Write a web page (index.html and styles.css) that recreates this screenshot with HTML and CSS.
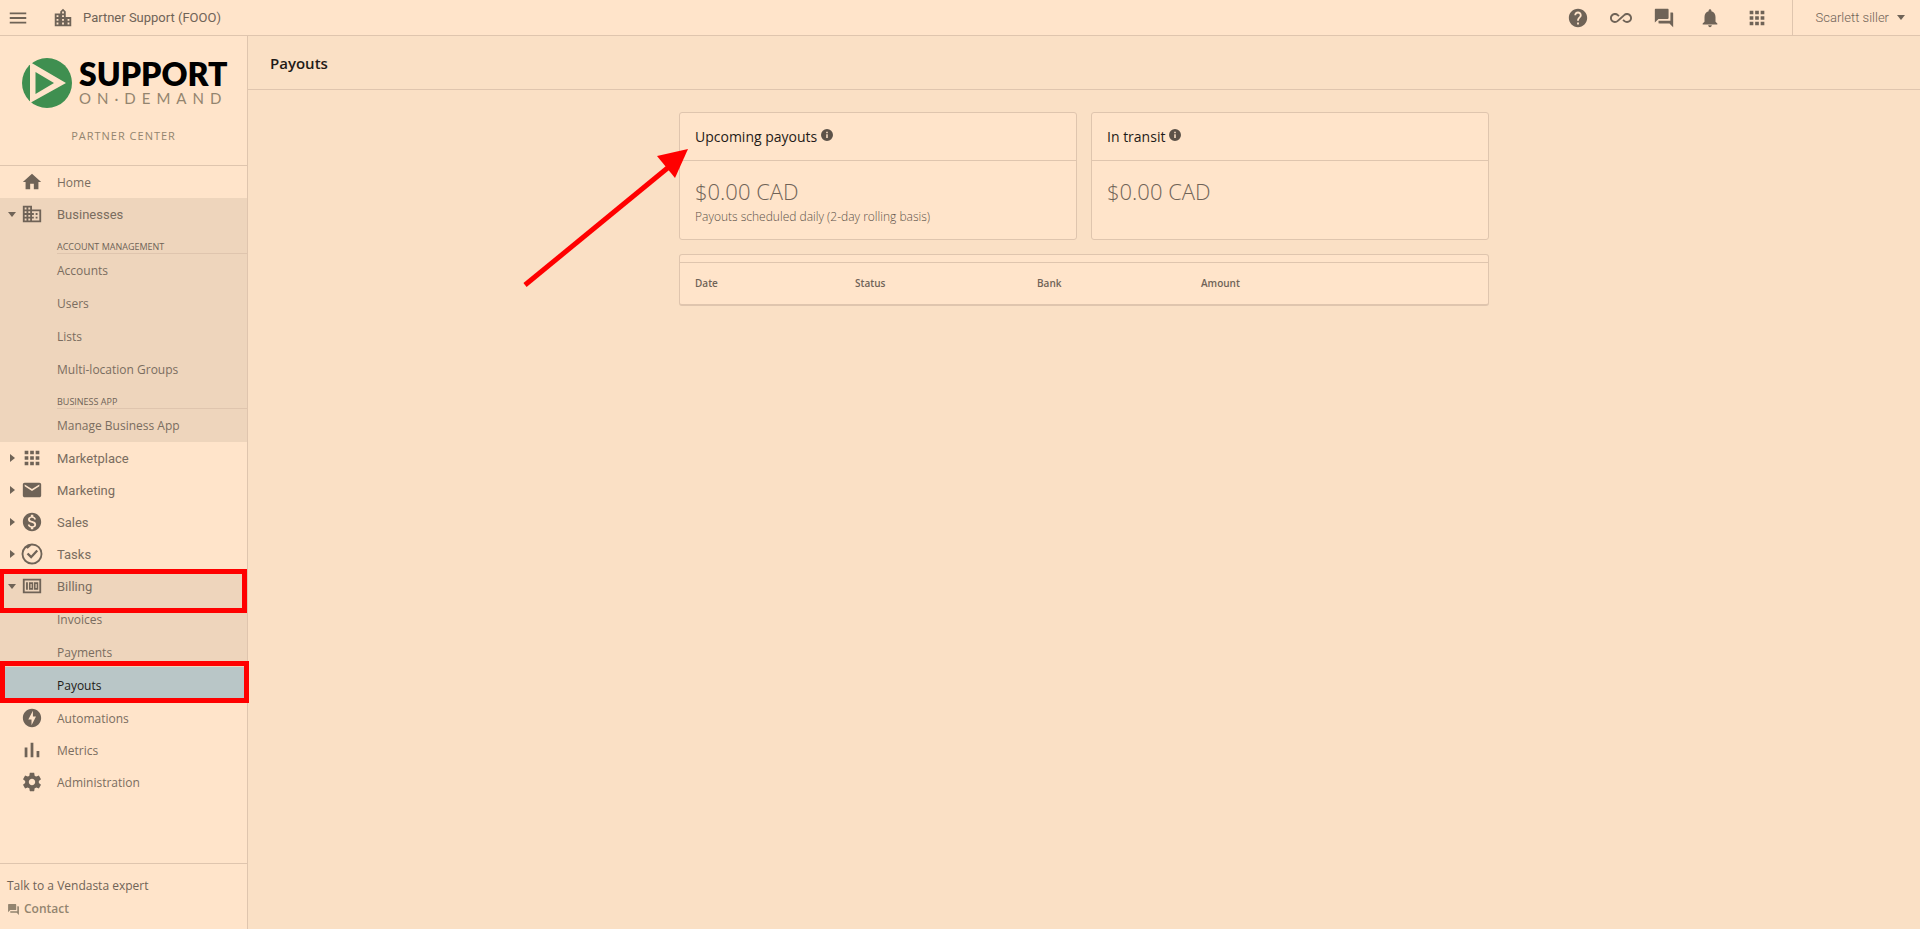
FILE: index.html
```html
<!DOCTYPE html>
<html lang="en">
<head>
<meta charset="UTF-8">
<meta name="viewport" content="width=device-width, initial-scale=1.0">
<title>Payouts</title>
<link rel="stylesheet" href="styles.css">
</head>
<body>
<svg class="sprite" aria-hidden="true">
  <symbol id="i-menu" viewBox="0 0 24 24"><path d="M3 18h18v-2H3v2zm0-5h18v-2H3v2zm0-7v2h18V6H3z"/></symbol>
  <symbol id="i-city" viewBox="0 0 24 24"><path d="M15 11V5l-3-3-3 3v2H3v14h18V11h-6zm-8 8H5v-2h2v2zm0-4H5v-2h2v2zm0-4H5V9h2v2zm6 8h-2v-2h2v2zm0-4h-2v-2h2v2zm0-4h-2V9h2v2zm0-4h-2V5h2v2zm6 12h-2v-2h2v2zm0-4h-2v-2h2v2z"/></symbol>
  <symbol id="i-help" viewBox="0 0 24 24"><path d="M12 2C6.48 2 2 6.48 2 12s4.48 10 10 10 10-4.48 10-10S17.52 2 12 2zm1 17h-2v-2h2v2zm2.07-7.75l-.9.92C13.45 12.9 13 13.5 13 15h-2v-.5c0-1.1.45-2.1 1.17-2.83l1.24-1.26c.37-.36.59-.86.59-1.41 0-1.1-.9-2-2-2s-2 .9-2 2H8c0-2.21 1.79-4 4-4s4 1.79 4 4c0 .88-.36 1.68-.93 2.25z"/></symbol>
  <symbol id="i-infinity" viewBox="0 0 24 24"><path d="M18.6 6.62c-1.44 0-2.8.56-3.77 1.53L12 10.66 10.48 12h.01L7.8 14.39c-.64.64-1.49.99-2.4.99-1.87 0-3.39-1.51-3.39-3.38S3.53 8.62 5.4 8.62c.91 0 1.76.35 2.44 1.03l1.13 1 1.51-1.34L9.22 8.2C8.2 7.18 6.84 6.62 5.4 6.62 2.42 6.62 0 9.04 0 12s2.42 5.38 5.4 5.38c1.44 0 2.8-.56 3.77-1.53l2.83-2.5.01.01L13.52 12h-.01l2.69-2.39c.64-.64 1.49-.99 2.4-.99 1.87 0 3.39 1.51 3.39 3.38s-1.52 3.38-3.39 3.38c-.9 0-1.76-.35-2.44-1.03l-1.14-1.01-1.51 1.34 1.27 1.12c1.02 1.01 2.37 1.57 3.82 1.57 2.98 0 5.4-2.41 5.4-5.38s-2.42-5.37-5.4-5.37z"/></symbol>
  <symbol id="i-forum" viewBox="0 0 24 24"><path d="M21 6h-2v9H6v2c0 .55.45 1 1 1h11l4 4V7c0-.55-.45-1-1-1zm-4 6V3c0-.55-.45-1-1-1H3c-.55 0-1 .45-1 1v14l4-4h10c.55 0 1-.45 1-1z"/></symbol>
  <symbol id="i-bell" viewBox="0 0 24 24"><path d="M12 22c1.1 0 2-.9 2-2h-4c0 1.1.89 2 2 2zm6-6v-5c0-3.07-1.64-5.64-4.5-6.32V4c0-.83-.67-1.5-1.5-1.5s-1.5.67-1.5 1.5v.68C7.63 5.36 6 7.92 6 11v5l-2 2v1h16v-1l-2-2z"/></symbol>
  <symbol id="i-apps" viewBox="0 0 24 24"><path d="M4 8h4V4H4v4zm6 12h4v-4h-4v4zm-6 0h4v-4H4v4zm0-6h4v-4H4v4zm6 0h4v-4h-4v4zm6-10v4h4V4h-4zm-6 4h4V4h-4v4zm6 6h4v-4h-4v4zm0 6h4v-4h-4v4z"/></symbol>
  <symbol id="i-home" viewBox="0 0 24 24"><path d="M10 20v-6h4v6h5v-8h3L12 3 2 12h3v8z"/></symbol>
  <symbol id="i-business" viewBox="0 0 24 24"><path d="M12 7V3H2v18h20V7H12zM6 19H4v-2h2v2zm0-4H4v-2h2v2zm0-4H4V9h2v2zm0-4H4V5h2v2zm4 12H8v-2h2v2zm0-4H8v-2h2v2zm0-4H8V9h2v2zm0-4H8V5h2v2zm10 12h-8v-2h2v-2h-2v-2h2v-2h-2V9h8v10zm-2-8h-2v2h2v-2zm0 4h-2v2h2v-2z"/></symbol>
  <symbol id="i-mail" viewBox="0 0 24 24"><path d="M20 4H4c-1.1 0-1.99.9-1.99 2L2 18c0 1.1.9 2 2 2h16c1.1 0 2-.9 2-2V6c0-1.1-.9-2-2-2zm0 4l-8 5-8-5V6l8 5 8-5v2z"/></symbol>
  <symbol id="i-dollar" viewBox="0 0 24 24"><path d="M12 2C6.48 2 2 6.48 2 12s4.48 10 10 10 10-4.48 10-10S17.52 2 12 2zm1.41 16.09V20h-2.67v-1.93c-1.71-.36-3.16-1.46-3.27-3.4h1.96c.1 1.05.82 1.87 2.65 1.87 1.96 0 2.4-.98 2.4-1.59 0-.83-.44-1.61-2.67-2.14-2.48-.6-4.18-1.62-4.18-3.67 0-1.72 1.39-2.84 3.11-3.21V4h2.67v1.95c1.86.45 2.79 1.86 2.85 3.39H14.3c-.05-1.11-.64-1.87-2.22-1.87-1.5 0-2.4.68-2.4 1.64 0 .84.65 1.39 2.67 1.91s4.18 1.39 4.18 3.91c-.01 1.83-1.38 2.83-3.12 3.16z"/></symbol>
  <symbol id="i-tasks" viewBox="0 0 24 24"><path d="M12 .6a11.4 11.4 0 1 0 0 22.8 11.4 11.4 0 0 0 0-22.8zm0 2.100a9.300 9.300 0 1 1-6.200 2.400L7.200 6.200 11.400 2.700z"/><path d="M6.200 12.200l1.900-1.700 3 3 5.700-6.100 1.800 1.700-7.500 8z"/></symbol>
  <symbol id="i-bill" viewBox="0 0 24 24"><path fill-rule="evenodd" d="M2 4h20v16H2zM4 6v12h16V6zM5.500 8h2v8h-2zM8.700 8h4.600v8H8.700zM10.400 9.700v4.600h1.200V9.700zM14.200 8h4.600v8h-4.600zM15.900 9.700v4.600h1.200V9.700z"/></symbol>
  <symbol id="i-bolt" viewBox="0 0 24 24"><path d="M12 2.020c-5.510 0-9.980 4.470-9.980 9.980s4.470 9.980 9.980 9.980 9.980-4.470 9.980-9.980S17.510 2.020 12 2.020zM11.480 20v-6.260H8L13 4v6.260h3.350L11.480 20z"/></symbol>
  <symbol id="i-chart" viewBox="0 0 24 24"><path d="M4 9.200h3V20H4zM10.500 4h3v16h-3zM17 13h3v7h-3z"/></symbol>
  <symbol id="i-gear" viewBox="0 0 24 24"><path d="M19.430 12.980c.04-.32.07-.64.07-.98s-.03-.66-.07-.98l2.110-1.650c.19-.15.24-.42.12-.64l-2-3.460c-.12-.22-.39-.3-.61-.22l-2.490 1c-.52-.4-1.080-.73-1.690-.98l-.38-2.650C14.460 2.180 14.250 2 14 2h-4c-.25 0-.46.18-.49.42l-.38 2.650c-.61.25-1.170.59-1.690.98l-2.490-1c-.23-.09-.49 0-.61.22l-2 3.460c-.13.22-.07.49.12.64l2.110 1.650c-.04.32-.07.65-.07.98s.03.66.07.98l-2.110 1.650c-.19.15-.24.42-.12.64l2 3.460c.12.22.39.3.61.22l2.490-1c.52.4 1.080.73 1.690.98l.38 2.650c.03.24.24.42.49.42h4c.25 0 .46-.18.49-.42l.38-2.650c.61-.25 1.170-.59 1.690-.98l2.490 1c.23.09.49 0 .61-.22l2-3.460c.12-.22.07-.49-.12-.64l-2.110-1.650zM12 15.500c-1.930 0-3.500-1.570-3.500-3.500s1.570-3.500 3.500-3.500 3.500 1.570 3.500 3.500-1.570 3.500-3.500 3.500z"/></symbol>
  <symbol id="i-info" viewBox="0 0 24 24"><path d="M12 0a12 12 0 1 0 0 24 12 12 0 0 0 0-24zm1.500 18h-3v-7.500h3zm0-9.500h-3v-3h3z"/></symbol>
</svg>

<header class="topbar">
  <button class="icon-btn menu-btn" aria-label="Menu"><svg class="icon"><use href="#i-menu"/></svg></button>
  <a href="#" class="partner"><svg class="icon"><use href="#i-city"/></svg>Partner Support (FOOO)</a>
  <div class="top-actions">
    <button class="icon-btn" aria-label="Help"><svg class="icon"><use href="#i-help"/></svg></button>
    <button class="icon-btn" aria-label="Updates"><svg class="icon"><use href="#i-infinity"/></svg></button>
    <button class="icon-btn" aria-label="Chat"><svg class="icon"><use href="#i-forum"/></svg></button>
  </div>
  <div class="top-actions wide">
    <button class="icon-btn" aria-label="Notifications"><svg class="icon"><use href="#i-bell"/></svg></button>
    <button class="icon-btn" aria-label="Apps"><svg class="icon"><use href="#i-apps"/></svg></button>
  </div>
  <button class="user-menu">Scarlett siller<span class="caret down"></span></button>
</header>

<div class="layout">
  <aside class="sidebar">
    <div class="brand">
      <a href="#" class="logo" aria-label="Support On-Demand">
        <svg class="logo-mark" viewBox="0 0 50 50">
          <circle cx="25" cy="25" r="25" fill="#3f8f50"/>
          <path fill="#ffe4ca" fill-rule="evenodd" d="M8 4L44 25 8 45zM13.500 14v22L32 25z"/>
        </svg>
        <span class="logo-text">
          <span class="logo-top">SUPPORT</span>
          <span class="logo-bottom">ON·DEMAND</span>
        </span>
      </a>
      <div class="brand-label">PARTNER CENTER</div>
    </div>

    <nav class="nav">
      <div class="nav-group">
        <a href="#" class="nav-item light"><span class="caret"></span><svg class="icon"><use href="#i-home"/></svg>Home</a>
      </div>
      <div class="nav-group open">
        <a href="#" class="nav-item"><span class="caret down"></span><svg class="icon"><use href="#i-business"/></svg>Businesses</a>
        <div class="sub-nav">
          <div class="sub-title">ACCOUNT MANAGEMENT</div>
          <a href="#" class="sub-item">Accounts</a>
          <a href="#" class="sub-item">Users</a>
          <a href="#" class="sub-item">Lists</a>
          <a href="#" class="sub-item">Multi-location Groups</a>
          <div class="sub-title">BUSINESS APP</div>
          <a href="#" class="sub-item">Manage Business App</a>
        </div>
      </div>
      <div class="nav-group">
        <a href="#" class="nav-item"><span class="caret right"></span><svg class="icon"><use href="#i-apps"/></svg>Marketplace</a>
        <a href="#" class="nav-item"><span class="caret right"></span><svg class="icon"><use href="#i-mail"/></svg>Marketing</a>
        <a href="#" class="nav-item"><span class="caret right"></span><svg class="icon"><use href="#i-dollar"/></svg>Sales</a>
        <a href="#" class="nav-item"><span class="caret right"></span><svg class="icon"><use href="#i-tasks"/></svg>Tasks</a>
      </div>
      <div class="nav-group open">
        <a href="#" class="nav-item"><span class="caret down"></span><svg class="icon"><use href="#i-bill"/></svg>Billing<span class="mark mark-billing"></span></a>
        <div class="sub-nav">
          <a href="#" class="sub-item">Invoices</a>
          <a href="#" class="sub-item">Payments</a>
          <a href="#" class="sub-item active">Payouts<span class="mark mark-payouts"></span></a>
        </div>
      </div>
      <div class="nav-group">
        <a href="#" class="nav-item light"><span class="caret"></span><svg class="icon"><use href="#i-bolt"/></svg>Automations</a>
        <a href="#" class="nav-item light"><span class="caret"></span><svg class="icon"><use href="#i-chart"/></svg>Metrics</a>
        <a href="#" class="nav-item light"><span class="caret"></span><svg class="icon"><use href="#i-gear"/></svg>Administration</a>
      </div>
    </nav>

    <div class="sidebar-footer">
      <div class="footer-title">Talk to a Vendasta expert</div>
      <a href="#" class="contact"><svg class="icon"><use href="#i-forum"/></svg>Contact</a>
    </div>
  </aside>

  <main class="main">
    <div class="page-header"><h1>Payouts</h1></div>
    <div class="content">
      <div class="cards">
        <section class="card">
          <h2 class="card-header">Upcoming payouts<svg class="info"><use href="#i-info"/></svg></h2>
          <div class="card-body">
            <div class="amount">$0.00 CAD</div>
            <p class="note">Payouts scheduled daily (2-day rolling basis)</p>
          </div>
          <svg class="arrow" viewBox="0 0 170 140"><path d="M5 137L150 18" stroke="#f00" stroke-width="5"/><path d="M168 1L137 8l18 22z" fill="#f00"/></svg>
        </section>
        <section class="card">
          <h2 class="card-header">In transit<svg class="info"><use href="#i-info"/></svg></h2>
          <div class="card-body">
            <div class="amount">$0.00 CAD</div>
          </div>
        </section>
      </div>
      <div class="table-card">
        <table class="payouts">
          <thead>
            <tr><th class="col-date">Date</th><th class="col-status">Status</th><th class="col-bank">Bank</th><th>Amount</th></tr>
          </thead>
        </table>
      </div>
    </div>
  </main>
</div>
</body>
</html>
```

FILE: styles.css
```css
*{margin:0;padding:0;box-sizing:border-box;}
:root{
  --bg:#fae0c5;
  --panel:#ffe4ca;
  --open:#eed5bc;
  --active:#b9c6c7;
  --border:#dfc5ae;
  --text:#6f6357;
  --text-light:#7a6d60;
  --text-muted:#93846f;
  --text-dark:#1f1b18;
  --mark:#ff0000;
}
body{display:flex;flex-direction:column;min-height:100vh;font-family:"Open Sans","Noto Sans",sans-serif;font-size:12px;background:var(--bg);color:var(--text);}
a{color:inherit;text-decoration:none;}
button{border:none;background:none;color:inherit;cursor:pointer;}
.sprite{position:absolute;width:0;height:0;}
.icon{width:22px;height:22px;fill:var(--text);flex:none;display:block;}

.caret{width:8px;height:10px;flex:none;display:flex;align-items:center;justify-content:center;}
.caret.down::before{content:"";border:4px solid transparent;border-top:5px solid var(--text);border-bottom:0;}
.caret.right::before{content:"";border:4px solid transparent;border-left:5px solid var(--text);border-right:0;}

/* top bar */
.topbar{height:36px;flex:none;display:flex;align-items:center;background:var(--panel);border-bottom:1px solid var(--border);font-family:Roboto,sans-serif;}
.menu-btn{margin-left:7px;}
.partner{display:flex;align-items:center;gap:9px;margin-left:23px;margin-right:auto;font-size:13px;}
.top-actions{display:flex;gap:21px;margin-right:24px;}
.top-actions.wide{gap:25px;}
.user-menu{align-self:stretch;display:flex;align-items:center;gap:8px;padding:0 15px 0 23px;border-left:1px solid var(--border);font-family:Roboto,sans-serif;font-size:13px;font-weight:300;}

.layout{flex:1;display:flex;}

/* sidebar */
.sidebar{width:248px;flex:none;display:flex;flex-direction:column;background:var(--panel);border-right:1px solid var(--border);}
.brand{height:130px;padding:22px 20px 0;border-bottom:1px solid var(--border);}
.logo{display:flex;align-items:center;gap:7px;margin-left:2px;}
.logo-mark{width:50px;height:50px;flex:none;}
.logo-text{display:flex;flex-direction:column;font-family:Lato,sans-serif;}
.logo-top{font-size:32px;line-height:30px;font-weight:800;color:#000;}
.logo-bottom{font-size:15px;line-height:18px;letter-spacing:6px;color:var(--text-muted);}
.brand-label{margin-top:20px;text-align:center;font-size:11px;line-height:16px;letter-spacing:1px;color:var(--text-muted);}
.nav{flex:1;}
.nav-group.open{background:var(--open);}
.nav-item{position:relative;display:flex;align-items:center;height:32px;padding-left:8px;font-family:Roboto,sans-serif;font-size:13px;color:var(--text-light);}
.nav-item .icon{margin:0 14px 0 5px;}
.nav-item.light{font-family:"Open Sans",sans-serif;font-size:12px;}
.sub-nav{display:flex;flex-direction:column;gap:1px;padding-top:2px;}
.sub-title{height:22px;margin-left:57px;padding-top:8px;font-size:9px;line-height:14px;border-bottom:1px solid var(--border);}
.sub-item{position:relative;height:32px;padding-left:57px;font-size:12px;line-height:32px;color:var(--text-light);}
.sub-item.active{background:var(--active);box-shadow:0 -3px 0 var(--active);color:var(--text-dark);}
.sidebar-footer{height:66px;padding:13px 7px;border-top:1px solid var(--border);font-weight:500;}
.footer-title{line-height:18px;}
.contact{display:flex;align-items:center;gap:4px;margin-top:5px;line-height:18px;font-weight:600;color:var(--text-muted);}
.contact .icon{width:13px;height:13px;fill:var(--text-muted);}

/* red callouts */
.mark{position:absolute;left:-1px;border:5px solid var(--mark);z-index:2;}
.mark-billing{top:-1px;width:248px;height:44px;}
.mark-payouts{top:-9px;left:0;width:249px;height:42px;}
.arrow{position:absolute;top:35px;right:386px;width:170px;height:140px;fill:none;}

/* page */
.main{flex:1;min-width:0;}
.page-header{height:54px;display:flex;align-items:center;padding-left:22px;border-bottom:1px solid var(--border);}
.page-header h1{font-size:15px;font-weight:600;color:var(--text-dark);}
.content{max-width:810px;margin:22px auto 0;}
.cards{display:flex;gap:14px;}
.card{position:relative;flex:1;height:128px;background:var(--panel);border:1px solid var(--border);border-radius:3px;}
.card-header{display:flex;align-items:center;gap:4px;height:48px;padding-left:15px;border-bottom:1px solid var(--border);font-size:14px;font-weight:400;color:var(--text-dark);}
.info{width:12px;height:12px;margin-bottom:4px;fill:#5c5249;}
.card-body{padding:14px 15px 0;}
.amount{font-size:22px;line-height:32px;font-weight:300;}
.note{font-size:12px;line-height:20px;font-weight:300;color:#5c5249;}
.table-card{margin-top:14px;padding-top:7px;background:var(--panel);border:1px solid var(--border);border-bottom-width:2px;border-radius:3px;}
.payouts{width:100%;border-collapse:collapse;border-top:1px solid var(--border);}
.payouts th{height:41px;padding-left:15px;text-align:left;font-size:10px;font-weight:600;}
.col-date{width:160px;}
.col-status{width:182px;}
.col-bank{width:164px;}
```
